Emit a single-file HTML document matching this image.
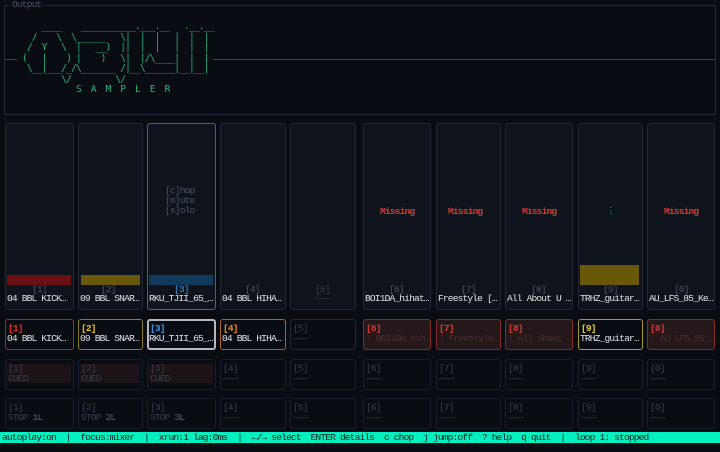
<!DOCTYPE html>
<html><head><meta charset="utf-8"><style>
*{margin:0;padding:0;box-sizing:border-box}
body{width:720px;height:452px;background:#090c13;overflow:hidden;position:relative;font-family:"Liberation Mono",monospace;font-size:9.6px;letter-spacing:-0.86px;line-height:10px;color:#dfe2e8}
.a{position:absolute;white-space:pre}
.box{position:absolute;border:1px solid #222835;border-radius:3px;background:#0d1119;background-image:radial-gradient(#151a24 0.6px,transparent 0.7px);background-size:2px 2px}
.pad{position:absolute;border:1px solid #1a202b;border-radius:3px}
.dim{color:#383f4d}
.g{color:#4c5463}
</style></head><body>
<!-- output box -->
<div class="a" style="left:4px;top:5px;width:712px;height:110px;border:1px solid #262c38;border-radius:2px"></div>
<div class="a" style="left:10px;top:0px;background:#090c13;color:#4c5463;padding:0 2px">Output</div>
<div class="a" style="left:5px;top:59px;width:12px;height:1px;background:#3a404c"></div>
<div class="a" style="left:213px;top:59px;width:502px;height:1px;background:#3a404c"></div>
<pre class="a" style="left:17px;top:22px;color:#1fb58a;line-height:10.5px;font-size:9.6px;letter-spacing:-0.86px">     ____    ___________.___.__   .__.__
   /    \  \______   \|  |  |   |  |  |
  /  Y   \  |   __)  ||  |  |   |  |  |
 (   |    ) |    )   \|  |/\____|  |  |
  \__|___/_/\_______ /|__\______|__|__|
         \/         \/
            S  A  M  P  L  E  R</pre>

<!-- mixer columns -->
<div class="box" style="left:5px;top:123px;width:69px;height:187px"></div>
<div class="box" style="left:78px;top:123px;width:65px;height:187px"></div>
<div class="box" style="left:147px;top:123px;width:69px;height:187px;border-color:#2f66b0"></div>
<div class="box" style="left:220px;top:123px;width:66px;height:187px"></div>
<div class="box" style="left:290px;top:123px;width:66px;height:187px"></div>
<div class="box" style="left:363px;top:123px;width:68px;height:187px"></div>
<div class="box" style="left:436px;top:123px;width:65px;height:187px"></div>
<div class="box" style="left:505px;top:123px;width:68px;height:187px"></div>
<div class="box" style="left:578px;top:123px;width:65px;height:187px"></div>
<div class="box" style="left:647px;top:123px;width:68px;height:187px"></div>

<div class="a" style="left:7px;top:275px;width:64px;height:10px;background:#6a0f14"></div>
<div class="a" style="left:81px;top:275px;width:59px;height:10px;background:#6a580a"></div>
<div class="a" style="left:149px;top:275px;width:64px;height:10px;background:#123a5c"></div>
<div class="a" style="left:580px;top:265px;width:59px;height:20px;background:#6a580a"></div>

<div class="a g" style="left:165px;top:186px;line-height:10px">[c]hop
[m]ute
[s]olo</div>
<div class="a" style="left:380px;top:207px;color:#d83a34;font-weight:bold">Missing</div>
<div class="a" style="left:448px;top:207px;color:#d83a34;font-weight:bold">Missing</div>
<div class="a" style="left:522px;top:207px;color:#d83a34;font-weight:bold">Missing</div>
<div class="a" style="left:606px;top:207px;color:#1fb58a">⋮</div>
<div class="a" style="left:664px;top:207px;color:#d83a34;font-weight:bold">Missing</div>

<div class="a g" style="left:32px;top:285px">[1]</div>
<div class="a g" style="left:101px;top:285px">[2]</div>
<div class="a" style="left:174px;top:285px;color:#3a9ae8">[3]</div>
<div class="a g" style="left:245px;top:285px">[4]</div>
<div class="a dim" style="left:315px;top:285px">[5]</div>
<div class="a g" style="left:389px;top:285px">[6]</div>
<div class="a g" style="left:461px;top:285px">[7]</div>
<div class="a g" style="left:531px;top:285px">[8]</div>
<div class="a g" style="left:603px;top:285px">[9]</div>
<div class="a g" style="left:674px;top:285px">[0]</div>

<div class="a" style="left:7px;top:294px">04 BBL KICK…</div>
<div class="a" style="left:80px;top:294px">09 BBL SNAR…</div>
<div class="a" style="left:149px;top:294px">RKU_TJII_65_…</div>
<div class="a" style="left:222px;top:294px">04 BBL HIHA…</div>
<div class="a dim" style="left:315px;top:294px">———</div>
<div class="a" style="left:365px;top:294px">BOI1DA_hihat…</div>
<div class="a" style="left:438px;top:294px">Freestyle […</div>
<div class="a" style="left:507px;top:294px">All About U …</div>
<div class="a" style="left:580px;top:294px">TRHZ_guitar…</div>
<div class="a" style="left:649px;top:294px">AU_LFS_85_Ke…</div>

<!-- pad row 1 -->
<div class="pad" style="left:5px;top:319px;width:69px;height:31px;border-color:#a3262a"></div>
<div class="pad" style="left:78px;top:319px;width:65px;height:31px;border-color:#8a7a22"></div>
<div class="pad" style="left:147px;top:319px;width:69px;height:31px;border:2px solid #b4b8c0"></div>
<div class="pad" style="left:220px;top:319px;width:66px;height:31px;border-color:#b0621c"></div>
<div class="pad" style="left:290px;top:319px;width:66px;height:31px;border-color:#252b36"></div>
<div class="pad" style="left:363px;top:319px;width:68px;height:31px;border-color:#8a2828;background:#24181a"></div>
<div class="pad" style="left:436px;top:319px;width:65px;height:31px;border-color:#8a2828;background:#24181a"></div>
<div class="pad" style="left:505px;top:319px;width:68px;height:31px;border-color:#8a2828;background:#24181a"></div>
<div class="pad" style="left:578px;top:319px;width:65px;height:31px;border-color:#a8982c"></div>
<div class="pad" style="left:647px;top:319px;width:68px;height:31px;border-color:#8a2828;background:#24181a"></div>

<div class="a" style="left:8px;top:324px;color:#e03030;font-weight:bold">[1]</div>
<div class="a" style="left:81px;top:324px;color:#e8c020;font-weight:bold">[2]</div>
<div class="a" style="left:150px;top:324px;color:#3a9ae8;font-weight:bold">[3]</div>
<div class="a" style="left:223px;top:324px;color:#e89030;font-weight:bold">[4]</div>
<div class="a dim" style="left:293px;top:324px">[5]</div>
<div class="a" style="left:366px;top:324px;color:#d83a34;font-weight:bold">[6]</div>
<div class="a" style="left:439px;top:324px;color:#d83a34;font-weight:bold">[7]</div>
<div class="a" style="left:508px;top:324px;color:#d83a34;font-weight:bold">[8]</div>
<div class="a" style="left:581px;top:324px;color:#e8d020;font-weight:bold">[9]</div>
<div class="a" style="left:650px;top:324px;color:#d83a34;font-weight:bold">[0]</div>

<div class="a" style="left:7px;top:334px">04 BBL KICK…</div>
<div class="a" style="left:80px;top:334px">09 BBL SNAR…</div>
<div class="a" style="left:149px;top:334px">RKU_TJII_65_…</div>
<div class="a" style="left:222px;top:334px">04 BBL HIHA…</div>
<div class="a dim" style="left:293px;top:334px">———</div>
<div class="a" style="left:366px;top:334px;color:#4a3034">! BOI1DA_hih…</div>
<div class="a" style="left:439px;top:334px;color:#4a3034">! Freestyle…</div>
<div class="a" style="left:508px;top:334px;color:#4a3034">! All About …</div>
<div class="a" style="left:580px;top:334px">TRHZ_guitar…</div>
<div class="a" style="left:650px;top:334px;color:#4a3034">! AU_LFS_85_…</div>

<!-- pad row 2 -->
<div class="pad" style="left:5px;top:359px;width:69px;height:31px"></div>
<div class="pad" style="left:78px;top:359px;width:65px;height:31px"></div>
<div class="pad" style="left:147px;top:359px;width:69px;height:31px"></div>
<div class="pad" style="left:220px;top:359px;width:66px;height:31px"></div>
<div class="pad" style="left:290px;top:359px;width:66px;height:31px"></div>
<div class="pad" style="left:363px;top:359px;width:68px;height:31px"></div>
<div class="pad" style="left:436px;top:359px;width:65px;height:31px"></div>
<div class="pad" style="left:505px;top:359px;width:68px;height:31px"></div>
<div class="pad" style="left:578px;top:359px;width:65px;height:31px"></div>
<div class="pad" style="left:647px;top:359px;width:68px;height:31px"></div>
<div class="a" style="left:7px;top:364px;width:64px;height:19px;background:#1c1319"></div>
<div class="a" style="left:80px;top:364px;width:60px;height:19px;background:#1c1319"></div>
<div class="a" style="left:149px;top:364px;width:64px;height:19px;background:#1c1319"></div>
<div class="a dim" style="left:8px;top:364px">[1]
CUED</div>
<div class="a dim" style="left:81px;top:364px">[2]
CUED</div>
<div class="a dim" style="left:150px;top:364px">[3]
CUED</div>
<div class="a dim" style="left:223px;top:364px">[4]
———</div>
<div class="a dim" style="left:293px;top:364px">[5]
———</div>
<div class="a dim" style="left:366px;top:364px">[6]
———</div>
<div class="a dim" style="left:439px;top:364px">[7]
———</div>
<div class="a dim" style="left:508px;top:364px">[8]
———</div>
<div class="a dim" style="left:581px;top:364px">[9]
———</div>
<div class="a dim" style="left:650px;top:364px">[0]
———</div>

<!-- pad row 3 -->
<div class="pad" style="left:5px;top:398px;width:69px;height:31px"></div>
<div class="pad" style="left:78px;top:398px;width:65px;height:31px"></div>
<div class="pad" style="left:147px;top:398px;width:69px;height:31px"></div>
<div class="pad" style="left:220px;top:398px;width:66px;height:31px"></div>
<div class="pad" style="left:290px;top:398px;width:66px;height:31px"></div>
<div class="pad" style="left:363px;top:398px;width:68px;height:31px"></div>
<div class="pad" style="left:436px;top:398px;width:65px;height:31px"></div>
<div class="pad" style="left:505px;top:398px;width:68px;height:31px"></div>
<div class="pad" style="left:578px;top:398px;width:65px;height:31px"></div>
<div class="pad" style="left:647px;top:398px;width:68px;height:31px"></div>
<div class="a dim" style="left:8px;top:403px">[1]
STOP <span style="color:#5a6170">1L</span></div>
<div class="a dim" style="left:81px;top:403px">[2]
STOP <span style="color:#5a6170">2L</span></div>
<div class="a dim" style="left:150px;top:403px">[3]
STOP <span style="color:#5a6170">3L</span></div>
<div class="a dim" style="left:223px;top:403px">[4]
———</div>
<div class="a dim" style="left:293px;top:403px">[5]
———</div>
<div class="a dim" style="left:366px;top:403px">[6]
———</div>
<div class="a dim" style="left:439px;top:403px">[7]
———</div>
<div class="a dim" style="left:508px;top:403px">[8]
———</div>
<div class="a dim" style="left:581px;top:403px">[9]
———</div>
<div class="a dim" style="left:650px;top:403px">[0]
———</div>

<!-- status bar -->
<div class="a" style="left:0;top:432px;width:720px;height:11px;background:#00f0c0"></div>
<div class="a" style="left:2px;top:432px;color:#0a1a18;line-height:11px">autoplay:on  |  focus:mixer  |  xrun:1 lag:0ms  |  ←/→ select  ENTER details  c chop  j jump:off  ? help  q quit  |  loop 1: stopped</div>
</body></html>
